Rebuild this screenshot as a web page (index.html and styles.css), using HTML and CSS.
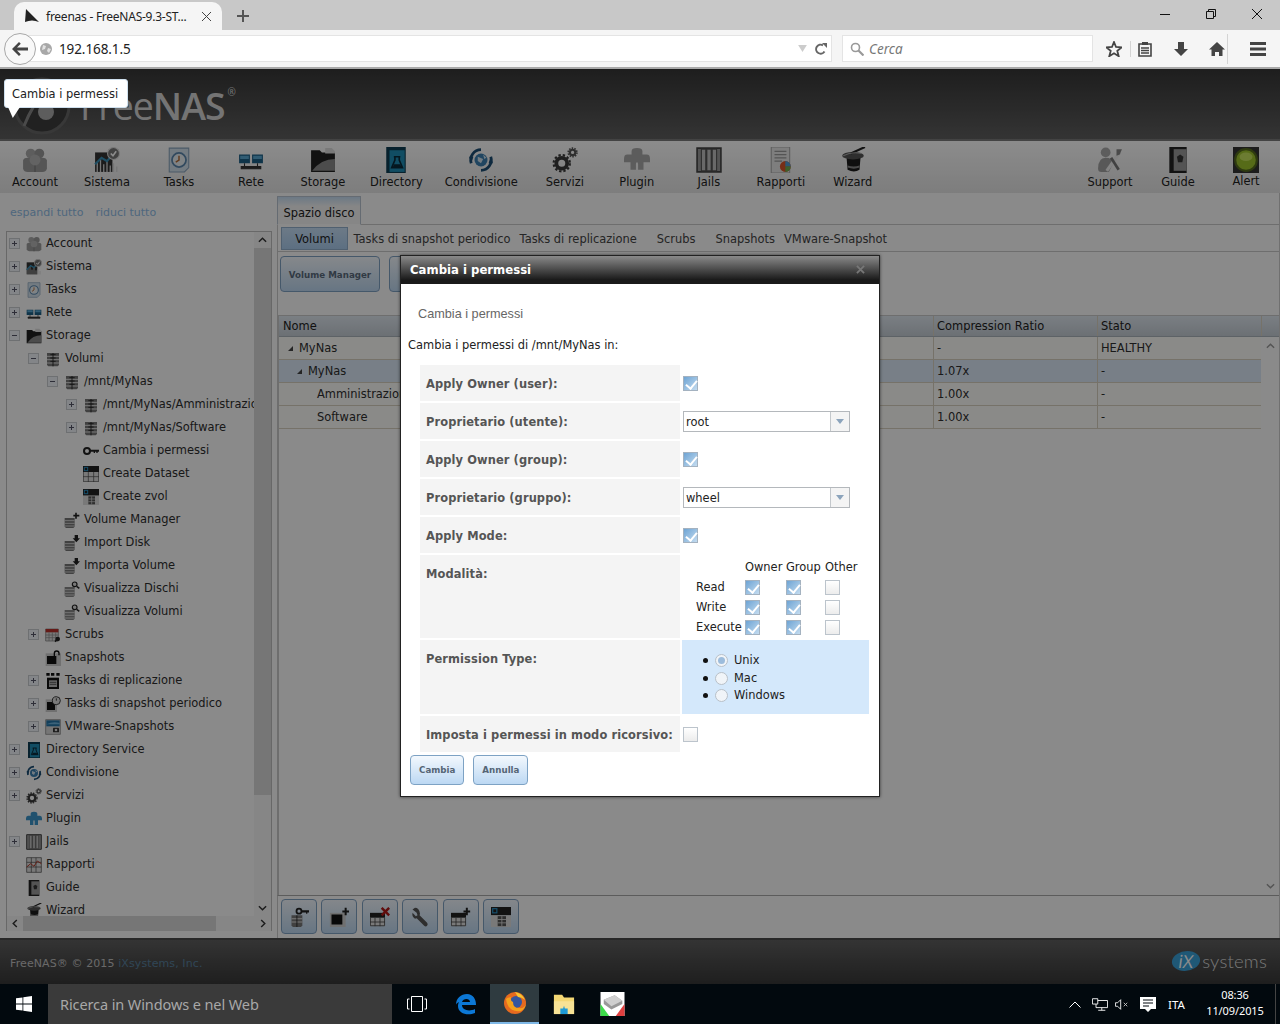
FILE: index.html
```html
<!DOCTYPE html>
<html lang="it">
<head>
<meta charset="utf-8">
<title>freenas - FreeNAS-9.3-STABLE</title>
<link rel="stylesheet" href="styles.css">
</head>
<body>
<svg class="sprites" aria-hidden="true">
  <symbol id="i-account" viewBox="0 0 24 24"><circle cx="8" cy="6" r="4.500" fill="#aaa"/><circle cx="16" cy="6" r="4.500" fill="#999"/><path d="M1 12q1-2 4-2h14q3 0 4 2v8q-1 3-4 3H5q-3 0-4-3z" fill="#9c9c9c"/><path d="M12 10v13" stroke="#777"/><circle cx="12" cy="12" r="5" fill="#b5b5b5"/></symbol>
  <symbol id="i-sistema" viewBox="0 0 24 24"><path d="M1 5h16v18H1z" fill="#333"/><path d="M3 23v-9M6 23v-12M9 23v-7M12 23v-10M15 23v-6M18 23v-8M21 23v-5" stroke="#d8d8d8" stroke-width="1.200"/><path d="M1 16l6-6 5 3 6-7" stroke="#3a8fb5" stroke-width="2" fill="none"/><circle cx="18" cy="6" r="5.500" fill="#777" stroke="#ddd"/><path d="M15.500 6l2 2 3-4" stroke="#fff" stroke-width="1.500" fill="none"/></symbol>
  <symbol id="i-tasks" viewBox="0 0 24 24"><path d="M3 1h18v18l-4 4H3z" fill="#d2e0ec" stroke="#8aa4bc"/><circle cx="12" cy="12" r="6.500" fill="#e8eef3" stroke="#5a86ac" stroke-width="1.600"/><path d="M12 8v4l-3 2" stroke="#b36a33" stroke-width="1.300" fill="none"/></symbol>
  <symbol id="i-rete" viewBox="0 0 24 24"><path d="M1 7h10v8H1zM13 7h10v8H13z" fill="#1c5f86"/><path d="M2 8h8v3H2zM14 8h8v3h-8z" fill="#5aa8d2"/><path d="M6 15v3M18 15v3M3 18h18v2H3z" stroke="#333" fill="#333"/></symbol>
  <symbol id="i-storage" viewBox="0 0 24 24"><path d="M1 3h8l2 2h12v18H1z" fill="#222"/><path d="M14 1h6l3 3v2h-9z" fill="#ddd"/><path d="M2 22q8-11 21-11v11z" fill="#8b8b8b"/></symbol>
  <symbol id="i-directory" viewBox="0 0 24 24"><path d="M3 0h18v24H3z" fill="#0d3c52"/><path d="M6 3h14v20H6z" fill="#1f8db4"/><path d="M10 9h6M11 9v3l-3 7h10l-3-7V9" stroke="#0a2a3a" stroke-width="1.500" fill="none"/><path d="M10 16h6l1 3H9z" fill="#0a2a3a"/></symbol>
  <symbol id="i-condiv" viewBox="0 0 24 24"><circle cx="12" cy="12" r="6" fill="#3b7fb0"/><path d="M9 9l5 2-2 4-3-2zM14 7l3 3-2 1z" fill="#cfe0ec"/><path d="M3 15A9.500 9.500 0 0 1 12 2.500" stroke="#1d4e74" stroke-width="2.600" fill="none"/><path d="M21 9a9.500 9.500 0 0 1-9 12.500" stroke="#1d4e74" stroke-width="2.600" fill="none"/><path d="M1 9l4 0-2 6zM23 15l-4 0 2-6z" fill="#1d4e74"/></symbol>
  <symbol id="i-servizi" viewBox="0 0 24 24"><circle cx="9" cy="15" r="5" fill="none" stroke="#3a3a3a" stroke-width="3.500"/><circle cx="9" cy="15" r="7.500" fill="none" stroke="#3a3a3a" stroke-width="2" stroke-dasharray="2.200 1.800"/><circle cx="19" cy="5" r="2.500" fill="none" stroke="#555" stroke-width="2"/><circle cx="19" cy="5" r="4" fill="none" stroke="#555" stroke-width="1.500" stroke-dasharray="1.400 1.100"/></symbol>
  <symbol id="i-plugin" viewBox="0 0 24 24"><path d="M7 7V4q0-3 5-3t5 3v3h4q3 0 3 4v3h-6v7h-5v-5q0-2-1-2t-1 2v5H6v-7H0v-3q0-4 3-4z" fill="currentColor"/></symbol>
  <symbol id="i-jails" viewBox="0 0 24 24"><path d="M1 1h22v22H1z" fill="#999" stroke="#444" stroke-width="1.500"/><path d="M5 2v20h4V2zM10 2v20h4V2zM15 2v20h4V2z" fill="#c0c0c0" stroke="#555"/></symbol>
  <symbol id="i-rapporti" viewBox="0 0 24 24"><path d="M3 0h17v24H3z" fill="#e6e6e6" stroke="#aaa"/><path d="M6 4h11M6 7h11M6 10h11M6 13h7" stroke="#999" stroke-width="1.200"/><circle cx="16" cy="18" r="5" fill="#d8562a"/><path d="M16 18v-5a5 5 0 0 1 5 5z" fill="#4d9ed6"/><path d="M16 18h5a5 5 0 0 1-5 5z" fill="#6fb04f"/></symbol>
  <symbol id="i-chart" viewBox="0 0 24 24"><path d="M1 1h22v22H1zM1 8h22M1 15h22M8 1v22M15 1v22" fill="#ddd" stroke="#444"/><path d="M1 15l6-5 5 4 5-8 6 4" stroke="#b43a2a" stroke-width="1.500" fill="none"/></symbol>
  <symbol id="i-wizard" viewBox="0 0 24 24"><path d="M6 9h13l-1 12q-5 3-11 0z" fill="#1c1c1c"/><path d="M7 17q6 2 11 0v2q-5 2-11 0z" fill="#888"/><ellipse cx="12" cy="8" rx="10" ry="3.500" fill="#555"/><path d="M10 6L23 0" stroke="#222" stroke-width="2"/><path d="M3 8q8-4 17-2" stroke="#aaa" fill="none"/></symbol>
  <symbol id="i-support" viewBox="0 0 24 24"><circle cx="8" cy="5" r="4.500" fill="#aaa"/><path d="M1 20q0-10 7-10 6 0 7 5l-4 8H4q-3 0-3-3z" fill="#a0a0a0"/><path d="M9 22L21 5" stroke="#eee" stroke-width="3"/><path d="M18 2l5 0-2 5-3 1z" fill="#888"/><path d="M13 10l7 11" stroke="#777" stroke-width="2.500"/></symbol>
  <symbol id="i-guide" viewBox="0 0 24 24"><path d="M4 0h16v24H4z" fill="#222"/><path d="M8 2h12v20H8z" fill="#999"/><path d="M11 9l3-2 3 2-1 5h-4z" fill="#333"/></symbol>
  <symbol id="i-alert" viewBox="0 0 24 24"><path d="M0 0h24v24H0z" fill="#333"/><circle cx="12" cy="12" r="11" fill="#556b1e"/><circle cx="12" cy="12" r="9" fill="#9dc32c"/><ellipse cx="12" cy="9" rx="6" ry="4" fill="#c5e25c"/></symbol>
  <symbol id="i-db" viewBox="0 0 24 24"><path d="M3 3h18v18l-2 2H5l-2-2z" fill="#777"/><path d="M3 8h18M3 13h18M3 18h18" stroke="#ddd" stroke-width="1.500"/><path d="M12 3v20M8 5.500h8M8 10.500h8M8 15.500h8" stroke="#222" stroke-width="1.300"/></symbol>
  <symbol id="i-dbplus" viewBox="0 0 24 24"><path d="M1 9h15v13l-2 2H3l-2-2z" fill="#777"/><path d="M1 13h15M1 17h15M1 21h15" stroke="#ddd" stroke-width="1.300"/><path d="M18 1v9M14 5.500h9" stroke="#222" stroke-width="2.400"/></symbol>
  <symbol id="i-dbdown" viewBox="0 0 24 24"><path d="M1 9h15v13l-2 2H3l-2-2z" fill="#777"/><path d="M1 13h15M1 17h15M1 21h15" stroke="#ddd" stroke-width="1.300"/><path d="M16 0h5v5h3l-5.500 6L13 5h3z" fill="#222"/></symbol>
  <symbol id="i-dbmag" viewBox="0 0 24 24"><path d="M1 9h15v13l-2 2H3l-2-2z" fill="#888"/><path d="M1 13h15M1 17h15M1 21h15" stroke="#ddd" stroke-width="1.300"/><circle cx="16" cy="5" r="3.500" fill="#ddd" stroke="#222" stroke-width="1.800"/><path d="M19 8l4 3" stroke="#222" stroke-width="2.200"/></symbol>
  <symbol id="i-key" viewBox="0 0 24 24"><circle cx="6" cy="12" r="4.500" fill="none" stroke="#222" stroke-width="3"/><path d="M10 10h14v3h-2v2h-2v-2h-2v2h-2v-2h-6z" fill="#222"/></symbol>
  <symbol id="i-keydb" viewBox="0 0 24 24"><circle cx="12" cy="5" r="3" fill="none" stroke="#222" stroke-width="2.200"/><path d="M14.500 4H24v2.500h-2V8h-1.500V6.500h-6z" fill="#222"/><path d="M3 10h13v12l-1.500 2h-10L3 22z" fill="#777"/><path d="M3 14h13M3 18h13" stroke="#ddd" stroke-width="1.300"/><path d="M9.500 10v14" stroke="#222"/></symbol>
  <symbol id="i-grid" viewBox="0 0 24 24"><path d="M0 0h24v9H0z" fill="#222"/><path d="M0 9h24v15H0z" fill="#ddd"/><path d="M.5 9v14.500h23V9M8 9v15M16 9v15M0 16h24" stroke="#444" fill="none"/><rect x="2" y="2" width="5" height="5" fill="none" stroke="#2a8dc0" stroke-width="1.500"/></symbol>
  <symbol id="i-griddb" viewBox="0 0 24 24"><path d="M0 0h24v10H0z" fill="#222"/><path d="M0 10h24v14H0z" fill="#ddd"/><path d="M8 11h10v12H8z" fill="#555"/><path d="M8 15h10M8 19h10M13 11v12" stroke="#ddd"/><rect x="2" y="2" width="5" height="5" fill="none" stroke="#2a8dc0" stroke-width="1.500"/></symbol>
  <symbol id="i-gridplus" viewBox="0 0 24 24"><path d="M0 7h18v6H0z" fill="#222"/><path d="M0 13h18v10H0z" fill="#ddd"/><path d="M.5 13v9.500h17V13M6 13v10M12 13v10M0 18h18" stroke="#444" fill="none"/><path d="M19 1v9M15 5.500h8" stroke="#222" stroke-width="2.400"/></symbol>
  <symbol id="i-griddel" viewBox="0 0 24 24"><path d="M0 7h18v6H0z" fill="#222"/><path d="M0 13h18v10H0z" fill="#ddd"/><path d="M.5 13v9.500h17V13M6 13v10M12 13v10M0 18h18" stroke="#444" fill="none"/><path d="M14 1l9 9M23 1l-9 9" stroke="#b01818" stroke-width="3"/></symbol>
  <symbol id="i-scrubs" viewBox="0 0 24 24"><path d="M1 3h19v18H1z" fill="#ddd" stroke="#777"/><path d="M1 3h19v5H1z" fill="#b8302a"/><path d="M1 12h19M1 16h19M6 8v13M11 8v13M16 8v13" stroke="#888"/><circle cx="19" cy="18" r="3.500" fill="#222"/><path d="M15 22l3-3" stroke="#222" stroke-width="2.500"/></symbol>
  <symbol id="i-snap" viewBox="0 0 24 24"><path d="M1 5h23v19H1z" fill="#ccc"/><path d="M3 9h14v12H3z" fill="#111"/><path d="M14 9V5a3.500 3.500 0 0 1 7 0v3" stroke="#111" stroke-width="2" fill="none"/></symbol>
  <symbol id="i-snapplus" viewBox="0 0 24 24"><path d="M1 7h19v17H1z" fill="#ccc"/><path d="M3 9h13v12H3z" fill="#111"/><path d="M20 1v9M16 5.500h8" stroke="#222" stroke-width="2.400"/></symbol>
  <symbol id="i-repl" viewBox="0 0 24 24"><path d="M2 0h5v4H2zM9 0h5v4H9zM17 0h5v4h-5z" fill="#111"/><path d="M3 7h18v17H3z" fill="#111"/><path d="M6 11h12v10H6z" fill="#bbb"/><path d="M7 14h10M7 17h10" stroke="#222"/></symbol>
  <symbol id="i-snapclock" viewBox="0 0 24 24"><path d="M1 5h17v19H1z" fill="#ccc"/><path d="M3 9h12v12H3z" fill="#111"/><circle cx="17" cy="7" r="6" fill="#ddd" stroke="#222" stroke-width="1.300"/><path d="M17 3.500V7" stroke="#222" stroke-width="1.300"/></symbol>
  <symbol id="i-vm" viewBox="0 0 24 24"><path d="M1 1h22v22H1z" fill="#d8d8d8" stroke="#777"/><path d="M2 2h20v9H2z" fill="#2473a6"/><path d="M2 8q10-5 20-2v2H2z" fill="#6cb2dc"/><rect x="12" y="13" width="9" height="7" rx="1" fill="#333"/><circle cx="16.500" cy="16.500" r="2" fill="#ddd"/></symbol>
  <symbol id="i-wrench" viewBox="0 0 24 24"><path d="M3 3l5 4 1 3-2 1-4-4q-1 5 3 7l2-.5 9 9q2 1.500 3.500 0t0-3.500l-9-9 .5-2Q11 1 6 1z" fill="#555"/></symbol>
</svg>

<header class="tabstrip">
  <div class="tab">
    <svg class="favicon" viewBox="0 0 16 16"><path d="M2 1l13 13Q8 11 1 14z" fill="#222"/></svg>
    <span class="tab-title">freenas - FreeNAS-9.3-ST...</span>
    <svg class="tab-x" viewBox="0 0 11 11"><path d="M1 1l9 9M10 1l-9 9" stroke="#444" fill="none"/></svg>
  </div>
  <svg class="new-tab" viewBox="0 0 12 12"><path d="M6 0v12M0 6h12" stroke="#555" stroke-width="2"/></svg>
  <div class="win-controls">
    <svg class="win-btn" viewBox="0 0 10 10"><path d="M0 5.500h10" stroke="#111"/></svg>
    <svg class="win-btn" viewBox="0 0 10 10"><path d="M.5 2.500h7v7h-7zM2.500 2.500v-2h7v7h-2" stroke="#111" fill="none"/></svg>
    <svg class="win-btn" viewBox="0 0 10 10"><path d="M0 0l10 10M10 0L0 10" stroke="#111" fill="none"/></svg>
  </div>
</header>

<nav class="navbar">
  <div class="url-wrap">
    <div class="back"><svg viewBox="0 0 16 14"><path d="M7 0l1.800 1.800L5 5.500h11v3H5l3.800 3.700L7 14 0 7z" fill="#444"/></svg></div>
    <div class="urlbar">
      <svg class="globe" viewBox="0 0 12 12"><circle cx="6" cy="6" r="6" fill="#a8a8a8"/><path d="M3 2l3 1-1 3-3 1zM8 5l3 1-2 4-2-2z" fill="#e2e2e2"/></svg>
      <span class="url">192.168.1.5</span>
      <svg class="dropmark" viewBox="0 0 10 8"><path d="M0 0h10L5 8z" fill="#ccc"/></svg>
      <svg class="reload" viewBox="0 0 12 12"><path d="M9.500 8.500A4.500 4.500 0 1 1 8 2.300" stroke="#666" stroke-width="2" fill="none"/><path d="M7 0h5v5z" fill="#666"/></svg>
    </div>
  </div>
  <div class="searchbar">
    <svg class="mag" viewBox="0 0 14 14"><circle cx="5.500" cy="5.500" r="4" stroke="#999" stroke-width="1.600" fill="none"/><path d="M8.500 8.500l5 5" stroke="#999" stroke-width="2.200"/></svg>
    <span class="cerca">Cerca</span>
  </div>
  <div class="nav-icons">
    <svg class="nav-ic" viewBox="0 0 16 16"><path d="M8 1l2 5 5.500.4-4.200 3.500 1.400 5.300L8 12.300l-4.700 2.900 1.400-5.300L.5 6.400 6 6z" fill="none" stroke="#444" stroke-width="1.800"/></svg>
    <i class="nav-sep"></i>
    <svg class="nav-ic" viewBox="0 0 16 16"><path d="M2 3h12v12H2z" fill="none" stroke="#444" stroke-width="1.600"/><path d="M5 1h6v3H5z" fill="#444"/><path d="M4 7h8M4 9.500h8M4 12h8" stroke="#444" stroke-width="1.300"/></svg>
    <svg class="nav-ic" viewBox="0 0 16 16"><path d="M5 1h6v7h4l-7 7-7-7h4z" fill="#444"/></svg>
    <svg class="nav-ic" viewBox="0 0 16 16"><path d="M8 1L0 8.500h2.500V15H6v-4h4v4h3.500V8.500H16z" fill="#444"/></svg>
    <i class="nav-sep tall"></i>
    <svg class="nav-ic menu" viewBox="0 0 16 16"><path d="M0 1h16v3H0zM0 6.500h16v3H0zM0 12h16v3H0z" fill="#444"/></svg>
  </div>
</nav>

<div class="app">
  <section class="brand">
    <svg class="brand-mark" viewBox="0 0 60 60"><circle cx="30" cy="30" r="27" fill="#3c3c3c" stroke="#666" stroke-width="3"/><path d="M12 50Q30 5 52 18" stroke="#888" stroke-width="3" fill="none"/><circle cx="34" cy="36" r="8" fill="#aaa"/></svg>
    <div class="brand-name"><span class="brand-free">Free</span><span class="brand-nas">NAS</span><sup class="brand-reg">®</sup></div>
  </section>

  <section class="toolbar">
    <div class="tool"><svg class="tool-ic"><use href="#i-account"/></svg><span>Account</span></div>
    <div class="tool"><svg class="tool-ic"><use href="#i-sistema"/></svg><span>Sistema</span></div>
    <div class="tool"><svg class="tool-ic"><use href="#i-tasks"/></svg><span>Tasks</span></div>
    <div class="tool"><svg class="tool-ic"><use href="#i-rete"/></svg><span>Rete</span></div>
    <div class="tool"><svg class="tool-ic"><use href="#i-storage"/></svg><span>Storage</span></div>
    <div class="tool"><svg class="tool-ic"><use href="#i-directory"/></svg><span>Directory</span></div>
    <div class="tool"><svg class="tool-ic"><use href="#i-condiv"/></svg><span>Condivisione</span></div>
    <div class="tool"><svg class="tool-ic"><use href="#i-servizi"/></svg><span>Servizi</span></div>
    <div class="tool"><svg class="tool-ic plugin-gray"><use href="#i-plugin"/></svg><span>Plugin</span></div>
    <div class="tool"><svg class="tool-ic"><use href="#i-jails"/></svg><span>Jails</span></div>
    <div class="tool"><svg class="tool-ic"><use href="#i-rapporti"/></svg><span>Rapporti</span></div>
    <div class="tool"><svg class="tool-ic"><use href="#i-wizard"/></svg><span>Wizard</span></div>
    <div class="tool tool-r first-r"><svg class="tool-ic"><use href="#i-support"/></svg><span>Support</span></div>
    <div class="tool tool-r"><svg class="tool-ic"><use href="#i-guide"/></svg><span>Guide</span></div>
    <div class="tool tool-r"><svg class="tool-ic"><use href="#i-alert"/></svg><span class="alert-label">Alert</span></div>
  </section>

  <main class="main">
    <aside class="side">
      <div class="side-links"><a>espandi tutto</a><a>riduci tutto</a></div>
      <div class="tree-box">
        <div class="tree">
          <div class="node l0"><i class="exp plus"></i><svg class="ti"><use href="#i-account"/></svg><span>Account</span></div>
          <div class="node l0"><i class="exp plus"></i><svg class="ti"><use href="#i-sistema"/></svg><span>Sistema</span></div>
          <div class="node l0"><i class="exp plus"></i><svg class="ti"><use href="#i-tasks"/></svg><span>Tasks</span></div>
          <div class="node l0"><i class="exp plus"></i><svg class="ti"><use href="#i-rete"/></svg><span>Rete</span></div>
          <div class="node l0"><i class="exp minus"></i><svg class="ti"><use href="#i-storage"/></svg><span>Storage</span></div>
          <div class="node l1"><i class="exp minus"></i><svg class="ti"><use href="#i-db"/></svg><span>Volumi</span></div>
          <div class="node l2"><i class="exp minus"></i><svg class="ti"><use href="#i-db"/></svg><span>/mnt/MyNas</span></div>
          <div class="node l3"><i class="exp plus"></i><svg class="ti"><use href="#i-db"/></svg><span>/mnt/MyNas/Amministrazione</span></div>
          <div class="node l3"><i class="exp plus"></i><svg class="ti"><use href="#i-db"/></svg><span>/mnt/MyNas/Software</span></div>
          <div class="node l3"><i class="exp"></i><svg class="ti"><use href="#i-key"/></svg><span>Cambia i permessi</span></div>
          <div class="node l3"><i class="exp"></i><svg class="ti"><use href="#i-grid"/></svg><span>Create Dataset</span></div>
          <div class="node l3"><i class="exp"></i><svg class="ti"><use href="#i-griddb"/></svg><span>Create zvol</span></div>
          <div class="node l2"><i class="exp"></i><svg class="ti"><use href="#i-dbplus"/></svg><span>Volume Manager</span></div>
          <div class="node l2"><i class="exp"></i><svg class="ti"><use href="#i-dbdown"/></svg><span>Import Disk</span></div>
          <div class="node l2"><i class="exp"></i><svg class="ti"><use href="#i-dbdown"/></svg><span>Importa Volume</span></div>
          <div class="node l2"><i class="exp"></i><svg class="ti"><use href="#i-dbmag"/></svg><span>Visualizza Dischi</span></div>
          <div class="node l2"><i class="exp"></i><svg class="ti"><use href="#i-dbmag"/></svg><span>Visualizza Volumi</span></div>
          <div class="node l1"><i class="exp plus"></i><svg class="ti"><use href="#i-scrubs"/></svg><span>Scrubs</span></div>
          <div class="node l1"><i class="exp"></i><svg class="ti"><use href="#i-snap"/></svg><span>Snapshots</span></div>
          <div class="node l1"><i class="exp plus"></i><svg class="ti"><use href="#i-repl"/></svg><span>Tasks di replicazione</span></div>
          <div class="node l1"><i class="exp plus"></i><svg class="ti"><use href="#i-snapclock"/></svg><span>Tasks di snapshot periodico</span></div>
          <div class="node l1"><i class="exp plus"></i><svg class="ti"><use href="#i-vm"/></svg><span>VMware-Snapshots</span></div>
          <div class="node l0"><i class="exp plus"></i><svg class="ti"><use href="#i-directory"/></svg><span>Directory Service</span></div>
          <div class="node l0"><i class="exp plus"></i><svg class="ti"><use href="#i-condiv"/></svg><span>Condivisione</span></div>
          <div class="node l0"><i class="exp plus"></i><svg class="ti"><use href="#i-servizi"/></svg><span>Servizi</span></div>
          <div class="node l0"><i class="exp"></i><svg class="ti plugin-blue"><use href="#i-plugin"/></svg><span>Plugin</span></div>
          <div class="node l0"><i class="exp plus"></i><svg class="ti"><use href="#i-jails"/></svg><span>Jails</span></div>
          <div class="node l0"><i class="exp"></i><svg class="ti"><use href="#i-chart"/></svg><span>Rapporti</span></div>
          <div class="node l0"><i class="exp"></i><svg class="ti"><use href="#i-guide"/></svg><span>Guide</span></div>
          <div class="node l0"><i class="exp"></i><svg class="ti"><use href="#i-wizard"/></svg><span>Wizard</span></div>
        </div>
        <div class="vbar">
          <div class="sb-arrow"><svg viewBox="0 0 10 6"><path d="M1 5l4-4 4 4" stroke="#333" stroke-width="1.600" fill="none"/></svg></div>
          <div class="vthumb"></div>
          <div class="vrest"></div>
          <div class="sb-arrow"><svg viewBox="0 0 10 6"><path d="M1 1l4 4 4-4" stroke="#333" stroke-width="1.600" fill="none"/></svg></div>
        </div>
        <div class="hbar">
          <div class="sb-arrow-h"><svg viewBox="0 0 6 10"><path d="M5 1L1 5l4 4" stroke="#333" stroke-width="1.600" fill="none"/></svg></div>
          <div class="hthumb"></div>
          <div class="hrest"></div>
          <div class="sb-arrow-h"><svg viewBox="0 0 6 10"><path d="M1 1l4 4-4 4" stroke="#333" stroke-width="1.600" fill="none"/></svg></div>
        </div>
      </div>
    </aside>

    <section class="pane">
      <div class="pane-tabs"><div class="pane-tab">Spazio disco</div></div>
      <div class="subtabs">
        <div class="subtab-on">Volumi</div>
        <div class="subtab">Tasks di snapshot periodico</div>
        <div class="subtab">Tasks di replicazione</div>
        <div class="subtab wide">Scrubs</div>
        <div class="subtab">Snapshots</div>
        <div class="subtab">VMware-Snapshot</div>
      </div>
      <div class="actions">
        <div class="action-btn">Volume Manager</div>
        <div class="action-btn"></div>
      </div>
      <div class="grid">
        <div class="grid-head row"><div>Nome</div><div>Compression Ratio</div><div>Stato</div><div></div></div>
        <div class="grid-body">
          <div class="rows">
            <div class="row"><div class="lv1"><i class="caret"></i>MyNas</div><div>-</div><div>HEALTHY</div></div>
            <div class="row sel"><div class="lv2"><i class="caret"></i>MyNas</div><div>1.07x</div><div>-</div></div>
            <div class="row"><div class="lv3">Amministrazione</div><div>1.00x</div><div>-</div></div>
            <div class="row"><div class="lv3">Software</div><div>1.00x</div><div>-</div></div>
          </div>
          <div class="grid-sb">
            <svg viewBox="0 0 10 6"><path d="M1 5l4-4 4 4" stroke="#999" stroke-width="1.600" fill="none"/></svg>
            <svg viewBox="0 0 10 6"><path d="M1 1l4 4 4-4" stroke="#999" stroke-width="1.600" fill="none"/></svg>
          </div>
        </div>
      </div>
      <div class="grid-tools">
        <div class="gt"><svg><use href="#i-keydb"/></svg></div>
        <div class="gt"><svg><use href="#i-snapplus"/></svg></div>
        <div class="gt"><svg><use href="#i-griddel"/></svg></div>
        <div class="gt"><svg><use href="#i-wrench"/></svg></div>
        <div class="gt"><svg><use href="#i-gridplus"/></svg></div>
        <div class="gt"><svg><use href="#i-griddb"/></svg></div>
      </div>
    </section>
  </main>

  <footer class="foot">
    <span class="foot-text">FreeNAS® © 2015 <span class="foot-link">iXsystems, Inc.</span></span>
    <div class="ix"><span class="ix-mark">iX</span><span class="ix-name">systems</span></div>
  </footer>

  <div class="overlay"></div>

  <div class="tooltip">Cambia i permessi</div>

  <div class="dialog">
    <div class="dlg-title"><span>Cambia i permessi</span>
      <svg class="dlg-x" viewBox="0 0 10 10"><path d="M1 1l8 8M9 1L1 9" stroke="#777" stroke-width="2"/></svg>
    </div>
    <div class="dlg-body">
      <div class="dlg-sub">Cambia i permessi</div>
      <div class="dlg-intro">Cambia i permessi di /mnt/MyNas in:</div>
      <div class="form">
        <div class="lab h36">Apply Owner (user):</div>
        <div class="val"><i class="cb on"></i></div>
        <div class="lab h36">Proprietario (utente):</div>
        <div class="val"><div class="select"><span>root</span><i class="sel-btn"></i></div></div>
        <div class="lab h36">Apply Owner (group):</div>
        <div class="val"><i class="cb on"></i></div>
        <div class="lab h36">Proprietario (gruppo):</div>
        <div class="val"><div class="select"><span>wheel</span><i class="sel-btn"></i></div></div>
        <div class="lab h36">Apply Mode:</div>
        <div class="val"><i class="cb on"></i></div>
        <div class="lab h83">Modalità:</div>
        <div class="perm">
          <span></span><span>Owner</span><span>Group</span><span>Other</span>
          <span>Read</span><i class="cb on"></i><i class="cb on"></i><i class="cb"></i>
          <span>Write</span><i class="cb on"></i><i class="cb on"></i><i class="cb"></i>
          <span>Execute</span><i class="cb on"></i><i class="cb on"></i><i class="cb"></i>
        </div>
        <div class="lab h74">Permission Type:</div>
        <ul class="ptype">
          <li><i class="radio on"></i><span>Unix</span></li>
          <li><i class="radio"></i><span>Mac</span></li>
          <li><i class="radio"></i><span>Windows</span></li>
        </ul>
        <div class="lab h36">Imposta i permessi in modo ricorsivo:</div>
        <div class="val"><i class="cb"></i></div>
      </div>
      <div class="dlg-btns"><div class="btn">Cambia</div><div class="btn">Annulla</div></div>
    </div>
  </div>
</div>

<div class="taskbar">
  <svg class="start" viewBox="0 0 16 16"><path d="M0 2.300l6.500-.9v6.200H0zM7.300 1.300L16 0v7.600H7.300zM0 8.400h6.500v6.200L0 13.700zM7.300 8.400H16V16l-8.700-1.300z" fill="#fff"/></svg>
  <div class="tb-search">Ricerca in Windows e nel Web</div>
  <div class="tb-cell"><svg class="tb-ic view" viewBox="0 0 20 16"><path d="M4.500.500h11v15h-11zM2.500 3H.5v10h2M17.500 3h2v10h-2" stroke="#fff" fill="none"/></svg></div>
  <div class="tb-cell"><svg class="tb-ic" viewBox="0 0 22 22"><path d="M1 12C1 5 6 1 12 1c6 0 9 5 9 11H7c0 5 7 7 13 4v4c-7 3-17 1-17-7 0-2 .500-3 1-4-2 1-3 2-3 3zM7 9h8c0-4-7-4-8 0z" fill="#0c78d6"/></svg></div>
  <div class="tb-cell active"><svg class="tb-ic ff" viewBox="0 0 24 24"><circle cx="12" cy="12" r="11" fill="#e66a1f"/><circle cx="13" cy="11" r="6" fill="#35569e"/><path d="M3 8q2 14 15 12 4-2 5-7-2 5-7 4-6 0-6-6-3-1-2-5-4 1-5 2z" fill="#f4a11c"/><path d="M12 1q7 1 10 8-3-3-7-3z" fill="#f7c531"/></svg></div>
  <div class="tb-cell"><svg class="tb-ic" viewBox="0 0 24 22"><path d="M1 1h9l2 3h11v18H1z" fill="#f3d774"/><path d="M1 8h22v14H1z" fill="#f7e295"/><path d="M8 22v-6h3l1-3 1 3h3v6z" fill="#1e9ad6"/></svg></div>
  <div class="tb-cell"><svg class="tb-ic app" viewBox="0 0 22 22"><path d="M0 0h22v22H0z" fill="#fff"/><path d="M0 11v11h8z" fill="#3ddc4a"/><path d="M22 11v11h-8z" fill="#e04040"/><path d="M3 7l10-4 7 5v3l-10 5-7-5z" fill="#999"/><path d="M3 7l10-4 7 5-10 5z" fill="#cfcfcf"/></svg></div>
  <div class="tray">
    <svg class="tr-ic chev" viewBox="0 0 12 7"><path d="M.5 6.500L6 1l5.500 5.500" stroke="#fff" fill="none"/></svg>
    <svg class="tr-ic net" viewBox="0 0 18 14"><path d="M4.500 2.500h13v8h-13zM11 10.500v3M7 13.500h8" stroke="#fff" fill="none"/><path d="M.5.500h6v6h-6z" fill="#02090e" stroke="#fff"/></svg>
    <svg class="tr-ic spk" viewBox="0 0 16 12"><path d="M.5 4h2.500L6.500.5v11L3 8H.5z" stroke="#fff" fill="none"/><path d="M10 4l4 4M14 4l-4 4" stroke="#ccc"/></svg>
    <svg class="tr-ic tr-action" viewBox="0 0 16 15"><path d="M0 0h16v12h-5l-3 3-3-3H0z" fill="#fff"/><path d="M3 3h10M3 6h10M3 9h6" stroke="#02090e"/></svg>
    <span class="lang">ITA</span>
    <div class="clock"><span>08:36</span><span>11/09/2015</span></div>
    <i class="showdesk"></i>
  </div>
</div>
</body>
</html>
```

FILE: styles.css
```css
* { box-sizing: border-box; }
html, body { margin: 0; padding: 0; }
body {
  width: 1280px;
  height: 1024px;
  overflow: hidden;
  display: flex;
  flex-direction: column;
  font-family: "DejaVu Sans", sans-serif;
  font-size: 11.45px;
  color: #333;
  background: #fff;
}
i { display: block; font-style: normal; }
.sprites { position: absolute; width: 0; height: 0; }

/* browser chrome */
.tabstrip { height: 30px; flex: none; background: #c8c8c8; display: flex; align-items: flex-end; padding-left: 14px; }
.tab {
  width: 208px; height: 28px; background: #f5f5f5; border-radius: 10px 10px 0 0;
  display: flex; align-items: center; padding: 0 7px 0 10px;
  font-family: "Noto Sans", sans-serif; font-size: 12px; color: #222;
}
.favicon { width: 16px; height: 16px; flex: none; margin-right: 6px; }
.tab-title { flex: 1; white-space: nowrap; letter-spacing: -.25px; }
.tab-x { width: 11px; height: 11px; flex: none; margin-right: 3px; }
.new-tab { width: 12px; height: 12px; margin: 0 0 8px 15px; }
.win-controls { margin-left: auto; display: flex; align-self: flex-start; gap: 36px; padding: 9px 18px 0 0; }
.win-btn { width: 10px; height: 10px; display: block; }

.navbar { height: 39px; flex: none; background: #f5f5f5; border-bottom: 2px solid #a9a9a9; display: flex; align-items: center; padding-left: 4px; }
.url-wrap { width: 828px; height: 27px; position: relative; flex: none; display: flex; align-items: center; }
.back {
  width: 32px; height: 32px; border-radius: 50%; background: #f8f8f8; border: 1px solid #a8a8a8;
  display: flex; align-items: center; justify-content: center; flex: none; position: relative; z-index: 1;
}
.back svg { width: 16px; height: 14px; }
.urlbar {
  flex: 1; height: 27px; margin-left: -12px; background: #fff; border: 1px solid #e4e4e4;
  display: flex; align-items: center; padding-left: 15px;
}
.globe { width: 12px; height: 12px; flex: none; }
.url { margin: 1px 0 0 7px; font-family: "Noto Sans", sans-serif; font-size: 13.5px; color: #222; letter-spacing: -.1px; }
.dropmark { width: 9px; height: 7px; margin-left: auto; }
.reload { width: 12px; height: 12px; margin: 0 4px 0 8px; }
.searchbar {
  width: 251px; height: 27px; margin-left: 10px; flex: none; background: #fff; border: 1px solid #e4e4e4;
  display: flex; align-items: center; padding-left: 7px;
}
.mag { width: 14px; height: 14px; }
.cerca { margin: 1px 0 0 5px; font-family: "Noto Sans", sans-serif; font-style: italic; font-size: 13.5px; color: #777; }
.nav-icons { flex: 1; display: flex; align-items: center; padding-left: 13px; position: relative; }
.nav-ic { width: 16px; height: 16px; flex: none; margin-right: 20px; display: block; }
.nav-sep { width: 1px; height: 16px; background: #d4d4d4; margin: 0 6px 0 -12px; flex: none; }
.nav-sep.tall { height: 30px; margin: 0 20px 0 -18px; }
.nav-ic.menu { margin-right: 0; width: 16px; margin-left: 2px; }

/* app shell */
.app { flex: 1; min-height: 0; position: relative; display: flex; flex-direction: column; overflow: hidden; }
.brand {
  height: 72px; flex: none; display: flex; align-items: center; padding-left: 12px;
  background: linear-gradient(#373737, #5f5f5f); border-bottom: 2px solid #7a7a7a;
}
.brand-mark { width: 60px; height: 60px; flex: none; margin-top: 4px; }
.brand-name { margin: 4px 0 0 8px; font-family: "Open Sans", sans-serif; font-size: 37.5px; line-height: 44px; color: #d4d4d4; letter-spacing: -1px; }
.brand-free { font-weight: 400; }
.brand-nas { font-weight: 600; }
.brand-reg { font-size: 10px; vertical-align: 24px; line-height: 0; margin-left: 3px; letter-spacing: 0; }

.toolbar {
  height: 52px; flex: none; display: flex; margin-left: -1px; width: 1281px;
  background: linear-gradient(#fefefe, #e4e4e4);
}
.tool {
  min-width: 72px; padding: 6px 11px 0; display: flex; flex-direction: column; align-items: center;
  line-height: 14px; color: #222;
}
.tool-ic { width: 26px; height: 26px; display: block; margin-bottom: 2px; flex: none; }
.plugin-gray { color: #a8a8a8; }
.plugin-blue { color: #3b94c8; }
.tool-r { min-width: 68px; }
.first-r { margin-left: auto; }
.alert-label { margin-top: -1px; }

/* main */
.main { height: 747px; flex: none; display: flex; background: #fbfbfb; border-bottom: 2px solid #4a4a4a; }
.side { width: 277px; flex: none; display: flex; flex-direction: column; padding: 0 5px 0 6px; }
.side-links { height: 38px; flex: none; display: flex; align-items: center; gap: 12px; padding: 0 0 0 4px; font-size: 11px; color: #8fbce6; }
.tree-box {
  height: 700px; border: 1px solid #bdbdbd; display: grid; grid-template-columns: 1fr 17px; grid-template-rows: 684px 15px;
}
.tree { overflow: hidden; min-width: 0; }
.node { height: 23px; display: flex; align-items: center; white-space: nowrap; color: #2e2e2e; }
.node span { margin-top: -1px; }
.l0 { padding-left: 2px; }
.l1 { padding-left: 21px; }
.l2 { padding-left: 40px; }
.l3 { padding-left: 59px; }
.exp { width: 11px; height: 11px; flex: none; margin-right: 6px; position: relative; }
.exp.plus, .exp.minus { background: #eef3f8; border: 1px solid #c8ccd0; }
.exp.plus::before, .exp.minus::before { content: ""; position: absolute; left: 2px; top: 4px; width: 5px; height: 1px; background: #556; }
.exp.plus::after { content: ""; position: absolute; left: 4px; top: 2px; width: 1px; height: 5px; background: #556; }
.ti { width: 16px; height: 16px; flex: none; margin-right: 4px; }
.vbar { display: flex; flex-direction: column; background: #f4f4f4; }
.sb-arrow { height: 16px; flex: none; display: flex; align-items: center; justify-content: center; }
.sb-arrow svg { width: 9px; height: 6px; }
.vthumb { height: 547px; flex: none; background: #d8d8d8; }
.vrest { flex: 1; }
.hbar { grid-column: 1 / 3; display: flex; background: #f4f4f4; }
.sb-arrow-h { width: 16px; flex: none; display: flex; align-items: center; justify-content: center; }
.sb-arrow-h svg { width: 6px; height: 9px; }
.hthumb { width: 193px; flex: none; background: #d8d8d8; }
.hrest { flex: 1; }

.pane { flex: 1; min-width: 0; display: flex; flex-direction: column; padding-top: 3px; border-right: 1px solid #ccc; }
.pane-tabs { height: 29px; flex: none; border-bottom: 1px solid #c8c8c8; }
.pane-tab {
  width: 84px; height: 29px; padding-top: 5px; background: linear-gradient(#c5dcf2, #f5f5f5 35%); border: 1px solid #b8c4d0; border-bottom: 1px solid #fbfbfb;
  display: flex; align-items: center; justify-content: center; color: #222; white-space: nowrap;
}
.subtabs { height: 27px; flex: none; display: flex; align-items: center; padding-left: 3px; border-bottom: 1px solid #c8c8c8; border-left: 1px solid #c8c8c8; color: #444; }
.subtab-on {
  width: 67px; height: 23px; padding-top: 1px; display: flex; align-items: center; justify-content: center; color: #222;
  background: linear-gradient(#c6def6, #a9cbec); border: 1px solid #92b0cc; margin-right: 1px;
}
.subtab { padding: 1px 4.5px 0; white-space: nowrap; }
.subtab.wide { padding: 1px 15.5px 0; }
.actions { height: 63px; flex: none; display: flex; gap: 9px; padding: 4px 0 0 2px; border-left: 1px solid #c8c8c8; }
.action-btn {
  width: 100px; height: 36px; padding-top: 1px; display: flex; align-items: center; justify-content: center; font-size: 8.7px; font-weight: 700; color: #5a6a7c;
  background: linear-gradient(#f3f8fd, #bcd6ef); border: 1px solid #7ea0c2; border-radius: 4px; white-space: nowrap;
}
.grid { flex: 1; min-height: 0; display: flex; flex-direction: column; border-left: 2px solid #c8c8c8; }
.row { display: grid; grid-template-columns: 654px 164px 164px; }
.row > div { padding-left: 3px; white-space: nowrap; display: flex; align-items: center; }
.row > div + div { border-left: 1px solid #d8d0c0; }
.grid-head { height: 22px; flex: none; width: 100%; grid-template-columns: 654px 164px 164px 1fr; background: linear-gradient(#dfe7ef, #c4ccd4); border-top: 1px solid #c8c8c8; border-bottom: 1px solid #aab2ba; color: #222; }
.row.grid-head > div:first-child { padding-left: 4px; }
.grid-body { flex: 1; display: flex; min-height: 0; }
.rows { width: 982px; flex: none; }
.rows .row { height: 23px; background: #fbfbf8; border-bottom: 1px solid #d8d0c0; color: #2e2e2e; }
.rows .row.sel { background: #dbe8f6; }
.grid-sb { flex: 1; display: flex; flex-direction: column; justify-content: space-between; align-items: center; padding: 6px 0 6px; }
.grid-sb svg { width: 9px; height: 6px; display: block; }
.rows .lv1 { padding-left: 9px; }
.rows .lv2 { padding-left: 18px; }
.rows .lv3 { padding-left: 38px; }
.caret { width: 0; height: 0; margin-right: 6px; border-left: 5px solid transparent; border-bottom: 5px solid #444; }
.grid-tools { height: 43px; flex: none; display: flex; gap: 4.4px; padding: 3px 0 0 3px; border-top: 1px solid #a8a8a8; border-left: 1px solid #c8c8c8; }
.gt {
  width: 36px; height: 35px; display: flex; align-items: center; justify-content: center;
  background: linear-gradient(#f0f6fc, #bcd6ef); border: 1px solid #7ea0c2; border-radius: 4px;
}
.gt svg { width: 20px; height: 20px; }

.foot { height: 44px; flex: none; display: flex; align-items: center; justify-content: space-between; padding: 2px 13px 0 10px; background: linear-gradient(#5f5f5f, #383838); }
.foot-text { color: #c0c0c0; font-size: 11px; letter-spacing: .1px; }
.foot-link { color: #58809e; }
.ix { display: flex; align-items: center; margin-top: -4px; }
.ix-mark {
  width: 28px; height: 20px; border-radius: 50%; background: #3aa0d8; color: #fff; font-family: "Open Sans", sans-serif; font-size: 18px; line-height: 20px;
  display: flex; align-items: center; justify-content: center; transform: skewX(-8deg);
}
.ix-name { margin-left: 2px; font-family: "Lato", sans-serif; font-weight: 300; font-size: 18.5px; color: #dcdcdc; letter-spacing: .2px; }

.overlay { position: absolute; inset: 0; background: rgba(0, 0, 0, .45); }

.tooltip {
  position: absolute; left: 4px; top: 10px; width: 124px; height: 29px; background: #fff; border: 1px solid #cfe0ee; border-radius: 3px;
  display: flex; align-items: center; padding-left: 7px; color: #222; white-space: nowrap;
}
.tooltip::after {
  content: ""; position: absolute; left: 3px; top: 27px; width: 12px; height: 11px; background: #fff;
  clip-path: polygon(0 0, 100% 0, 40% 100%);
}

/* dialog */
.dialog {
  position: absolute; left: 400px; top: 186px; width: 480px; height: 542px; background: #fff;
  border: 1px solid #222; box-shadow: 0 0 3px rgba(0,0,0,.6); display: flex; flex-direction: column;
}
.dlg-title {
  height: 28px; flex: none; display: flex; align-items: center; justify-content: space-between; padding: 0 14px 1px 9px;
  background: linear-gradient(#8a8a8a, #1a1a1a 85%); color: #fff; font-size: 11.7px; font-weight: 700;
}
.dlg-x { width: 9px; height: 9px; }
.dlg-body { flex: 1; padding: 0 0 0 7px; }
.dlg-sub { margin: 22px 0 0 10px; height: 16px; line-height: 16px; font-family: "Liberation Sans", sans-serif; font-size: 12.7px; color: #666; }
.dlg-intro { margin-top: 15px; height: 16px; line-height: 16px; color: #222; white-space: nowrap; }
.form { margin: 12px 0 0 12px; display: grid; grid-template-columns: 260px 187px; column-gap: 2px; row-gap: 2px; align-items: stretch; }
.lab { padding: 13px 0 0 6px; background: #f4f4f4; font-weight: 700; color: #555; line-height: 13px; letter-spacing: .1px; white-space: nowrap; }
.h36 { height: 36px; }
.h83 { height: 83px; }
.h74 { height: 74px; }
.val { display: flex; align-items: center; padding-left: 1px; color: #222; }
.cb { width: 15px; height: 15px; border: 1px solid #bcc4cc; background: linear-gradient(#fff, #ececec); position: relative; flex: none; }
.cb.on { background: linear-gradient(135deg, #6ea4d4, #c4dcf0); border-color: #a4b2c0; }
.cb.on::after {
  content: ""; position: absolute; left: 4px; top: 1px; width: 5px; height: 9px; border: solid #fff; border-width: 0 2px 2px 0; transform: rotate(40deg);
}
.select { width: 167px; height: 21px; border: 1px solid #b4b8bc; display: flex; align-items: center; padding-left: 2px; color: #222; }
.select span { flex: 1; margin-top: 1px; }
.sel-btn { width: 19px; height: 19px; border-left: 1px solid #c4c8cc; background: #f4f4f4; position: relative; }
.sel-btn::after {
  content: ""; position: absolute; left: 5px; top: 7px; border: 4px solid transparent; border-top: 5px solid #8ca4bc; border-bottom: 0;
}
.perm {
  display: grid; grid-template-columns: 49px 41px 39px 40px; grid-template-rows: 21px 20px 20px 20px; padding: 1px 0 0 14px; color: #222; align-items: center; justify-items: start; white-space: nowrap;
}
.ptype { margin: 0; padding: 12px 0 0 21px; background: #d4e8fb; list-style: none; color: #111; }
.ptype li { height: 17.500px; line-height: 17px; white-space: nowrap; }
.ptype li::before { content: ""; display: inline-block; vertical-align: middle; width: 5px; height: 5px; margin-right: 7px; border-radius: 50%; background: #111; }
.ptype span { color: #222; margin-left: 6px; vertical-align: middle; }
.radio { display: inline-block; vertical-align: middle; width: 13px; height: 13px; border-radius: 50%; border: 1px solid #b8c0c8; background: #f0f4f8; position: relative; }
.radio.on::after { content: ""; position: absolute; left: 2px; top: 2px; width: 7px; height: 7px; border-radius: 50%; background: #9cbcdc; }
.dlg-btns { display: flex; gap: 9px; margin: 3px 0 0 2px; }
.btn {
  height: 30px; padding: 0 8px 1px; display: flex; align-items: center; font-size: 8.7px; font-weight: 700; color: #556575;
  background: linear-gradient(#f3f8fd, #bcd8f3); border: 1px solid #7da2c4; border-radius: 4px; min-width: 54px; justify-content: center;
}

/* taskbar */
.taskbar { height: 40px; flex: none; background: #02090e; display: flex; align-items: center; padding-left: 16px; color: #fff; }
.start { width: 16px; height: 16px; flex: none; margin-right: 16px; }
.tb-search {
  width: 344px; height: 40px; flex: none; background: #3a3a3a; display: flex; align-items: center; padding-left: 12px;
  font-family: "Noto Sans", sans-serif; font-size: 14.500px; color: #a8a8a8; letter-spacing: -.1px;
}
.tb-cell { width: 49px; height: 40px; flex: none; display: flex; align-items: center; justify-content: center; }
.tb-cell.active { background: #2f3b40; border-bottom: 2px solid #7fb8e6; }
.tb-ic { width: 22px; height: 22px; display: block; }
.tb-ic.view { width: 20px; height: 16px; }
.tb-ic.ff { width: 24px; height: 24px; }
.tb-ic.app { width: 24px; height: 24px; }
.tray { margin-left: auto; display: flex; align-items: center; height: 40px; }
.tr-ic { display: block; flex: none; }
.chev { width: 12px; height: 7px; margin-right: 11px; }
.net { width: 16px; height: 13px; margin-right: 7px; }
.spk { width: 14px; height: 11px; margin-right: 11px; }
.tr-action { width: 16px; height: 15px; margin-right: 12px; }
.lang { width: 18px; font-family: "Noto Sans", sans-serif; font-size: 11.500px; margin-right: 19px; white-space: nowrap; }
.clock { width: 60px; padding-bottom: 2px; display: flex; flex-direction: column; align-items: center; font-family: "Noto Sans", sans-serif; font-size: 11px; line-height: 16px; letter-spacing: -.1px; white-space: nowrap; }
.showdesk { width: 1px; height: 40px; background: #444; margin: 0 4px 0 10px; }
```
